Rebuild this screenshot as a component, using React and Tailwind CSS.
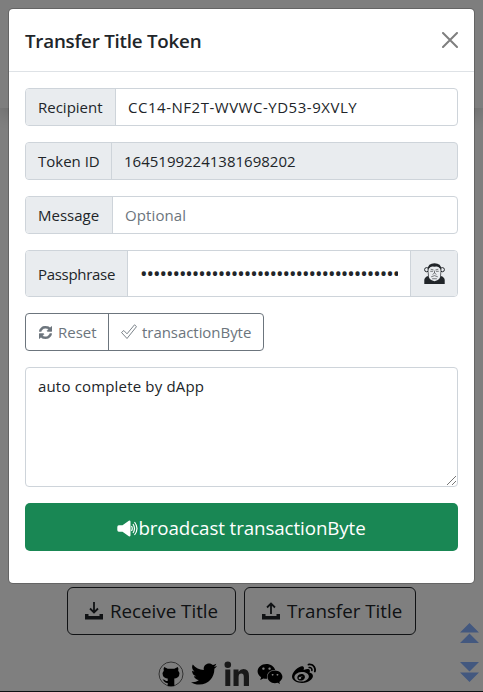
import { FaTwitter, FaWeixin, FaWeibo } from "react-icons/fa";

const font = "font-['Open_Sans','Noto_Sans',sans-serif]";

function Field({ label, labelClass, children, className = "h-[38px]", inputClass = "bg-white" }) {
  return (
    <div className={`flex rounded border border-[#ced4da] overflow-hidden ${className} ${inputClass}`}>
      <label className={`flex shrink-0 items-center border-r border-[#ced4da] bg-[#e9ecef] pl-3 ${labelClass}`}>{label}</label>
      {children}
    </div>
  );
}

function Monkey() {
  return (
    <svg className="h-[21px] w-[21px]" viewBox="0 0 22 22" fill="none">
      <path d="M0.300 22V17.500q.5-3 4-4h13.400q3.500 1 4 4V22z" fill="#212529" />
      <circle cx="2.800" cy="7" r="2.200" fill="#e9ecef" stroke="#212529" strokeWidth="1" />
      <circle cx="19.200" cy="7" r="2.200" fill="#e9ecef" stroke="#212529" strokeWidth="1" />
      <path d="M3.800 7Q4 .300 11 .300T18.200 7l-.5 8H4.300z" fill="#212529" />
      <path d="M5 6q2.500-3.500 6-2 3.500-1.500 6 2 1 3 .2 5.500.5 6.500-6.200 7.500-6.700-1-6.200-7.500Q4 9 5 6z" fill="#e9ecef" />
      <path d="M7 6.500l3 .8M15 6.500l-3 .8M6.500 8.700h3M12.500 8.700h3M9 12L11 10.500l2 1.500M11 8v2.500M7.500 14.500q3.500-2.500 7 0M8.500 16.500h5" stroke="#212529" strokeWidth=".6" />
    </svg>
  );
}

function TrayIcon({ up }) {
  return (
    <svg className="h-[18px] w-[18px] shrink-0" viewBox="0 0 18 18" fill="none">
      <path d="M0 12h3.500v2h11v-2H18v5.500H0z" fill="#212529" />
      <path d={up ? "M9 12V2M5 5.500l4-4 4 4" : "M9 0v10M5 6.500l4 4 4-4"} stroke="#212529" strokeWidth="1.800" />
    </svg>
  );
}

function Github() {
  return (
    <svg className="h-[26px] w-[26px]" viewBox="0 0 26 26">
      <circle cx="13" cy="13" r="12" fill="none" stroke="#666" strokeWidth="1" />
      <path d="M6.200 6l3.500 1.700h6.600L19.800 6q1 1.800.4 3.700 2.100 2 .9 4.800-1 2.600-4.800 3.100v7.600h-6.600v-3.300c-3.200.5-3.600-2.700-5.500-3.400 2.800-.7 3 2 5.500 1.500v-2.400q-3.800-.5-4.800-3.100-1.200-2.800.9-4.800Q5.200 7.800 6.200 6z" fill="#000" />
    </svg>
  );
}

function LinkedIn() {
  return (
    <svg className="h-[26px] w-[26px]" viewBox="0 0 26 26" fill="#333">
      <circle cx="3.800" cy="3.800" r="3.300" />
      <path d="M1.300 8.500h5V25h-5zM9.500 8.500h5v2.200q1.800-2.600 5-2.600 5.500 0 5.500 7V25h-5.200v-9q0-3.400-2.500-3.400-2.700 0-2.700 3.400v9H9.500z" />
    </svg>
  );
}

function Speaker() {
  return (
    <svg className="h-[17px] w-[21px]" viewBox="0 0 21 17" fill="none">
      <path d="M1.800 5.200h3.700L12.200.5q1.300 0 1.300 1v14q0 1-1.300 1L5.500 11.800H1.800Q.3 11.800.3 10V7q0-1.800 1.500-1.800z" fill="#fff" />
      <path d="M14.500 6q1.500 2.500 0 5M16 4q3 4.500 0 9M17.500 2q5 6.500 0 13" stroke="#fff" strokeWidth="1.200" />
    </svg>
  );
}

function Arrows({ down }) {
  return (
    <svg className="h-5 w-[19px]" viewBox="0 0 19 20" fill="#86b0ff">
      <path d={down ? "M0 0h19L9.500 9.500zM0 10.500h19L9.500 20z" : "M0 9.500h19L9.500 0zM0 20h19L9.500 10.500z"} />
    </svg>
  );
}

export default function App() {
  return (
    <div className={`relative h-[692px] w-[483px] overflow-hidden bg-white ${font} text-[15px] leading-6 text-[#212529]`}>
      <div className="flex h-full flex-col">
        <header className="h-[108px] shrink-0 bg-[#fdfdfd] shadow-[0_8px_16px_rgba(0,0,0,0.15)]" />
        <main className="flex grow flex-col justify-end">
          <div className="flex gap-2 pl-[67px] text-[18.750px]">
            <button className="flex h-12 w-[169px] items-center gap-[7px] rounded-md border border-[#212529] pl-[17px]"><TrayIcon />Receive Title</button>
            <button className="flex h-12 w-[172px] items-center gap-[7px] rounded-md border border-[#212529] pl-[17px]"><TrayIcon up />Transfer Title</button>
          </div>
          <div className="flex h-[57px] items-start gap-[7px] border-b border-[#212529] pl-[158px] pt-[26px] text-black">
            <Github />
            <FaTwitter className="h-[26px] w-[26px]" />
            <LinkedIn />
            <FaWeixin className="h-[26px] w-[26px]" />
            <FaWeibo className="ml-[2px] h-[26px] w-6" />
          </div>
        </main>
      </div>
      <div className="absolute left-[460px] top-[623px] flex flex-col gap-[19px]"><Arrows /><Arrows down /></div>
      <div className="absolute inset-0 bg-black/50" />

      <section className="absolute left-2 top-2 h-[576px] w-[467px] rounded-[5px] border border-black/20 bg-white bg-clip-padding">
        <header className="flex h-[63px] items-center justify-between border-b border-[#dee2e6] pl-4 pr-4">
          <h5 className="pt-0.5 text-[18.750px] font-semibold tracking-[-0.22px]">Transfer Title Token</h5>
          <svg className="h-4 w-4" viewBox="0 0 16 16" stroke="#7f7f7f" strokeWidth="2" strokeLinecap="round"><path d="M1 1l14 14M15 1L1 15" /></svg>
        </header>
        <div className="flex flex-col gap-4 p-4">
          <Field label="Recipient" labelClass="w-[90px]"><div className="flex items-center pl-3 tracking-[0.52px]">CC14-NF2T-WVWC-YD53-9XVLY</div></Field>
          <Field label="Token ID" labelClass="w-[86px]" inputClass="bg-[#e9ecef]"><div className="flex items-center pl-3">16451992241381698202</div></Field>
          <Field label="Message" labelClass="w-[87px]"><div className="flex items-center pl-3 tracking-[0.1px] text-[#6c757d]">Optional</div></Field>
          <Field label="Passphrase" labelClass="w-[102px] tracking-[-0.3px]" className="h-[47px]">
            <div className="flex w-[282px] shrink-0 items-center pl-3"><div className="w-[258px] overflow-hidden whitespace-nowrap text-[20px] tracking-[-1.040px]">••••••••••••••••••••••••••••••••••••••••</div></div>
            <div className="flex grow items-center justify-center border-l border-[#ced4da] bg-[#e9ecef]"><Monkey /></div>
          </Field>
          <div className="flex h-[38px] w-[239px] rounded border border-[#6c757d] text-[#6c757d]">
            <button className="flex w-[83px] items-center gap-[6px] border-r border-[#6c757d] pl-[13px]">
              <svg className="h-[13px] w-[13px]" viewBox="0 0 1536 1536" fill="currentColor" stroke="currentColor" strokeWidth="60"><path d="M1511 928q0 5-1 7-64 268-268 434.500T764 1536q-146 0-282.500-55T238 1324l-129 129q-19 19-45 19t-45-19-19-45V960q0-26 19-45t45-19h448q26 0 45 19t19 45-19 45l-137 137q71 66 161 102t187 36q134 0 250-65t186-179q11-17 53-117 8-23 30-23h192q13 0 22.500 9.500t9.500 22.500zm25-800v448q0 26-19 45t-45 19h-448q-26 0-45-19t-19-45 19-45l138-138Q969 256 768 256q-134 0-250 65T332 500q-11 17-53 117-8 23-30 23H50q-13 0-22.500-9.500T18 608v-7q65-268 270-434.500T768 0q146 0 284 55.500T1297 212l130-129q19-19 45-19t45 19 19 45z" /></svg>
              Reset
            </button>
            <button className="flex items-center gap-[5px] pl-3 tracking-[-0.05px]">
              <svg className="h-4 w-4 shrink-0" viewBox="0 0 16 16" fill="none" stroke="currentColor" strokeWidth=".9" strokeLinejoin="round"><path d="M.5 8.500l2.300-2 3.200 3.300L13.500.8l2 1.800L6 14.500z" /></svg>
              transactionByte
            </button>
          </div>
          <div className="relative h-[120px] rounded border border-[#ced4da] px-3 py-[6px] tracking-[0.17px]">
            auto complete by dApp
            <svg className="absolute bottom-px right-px h-[9px] w-[9px]" viewBox="0 0 9 9" stroke="#777" fill="none"><path d="M0 9L9 0M5 9l4-4" /></svg>
          </div>
          <button className="flex h-12 items-center justify-center rounded-[5px] bg-[#198754] pt-0.5 text-[18.750px] tracking-[-0.1px] text-white"><Speaker />broadcast transactionByte</button>
        </div>
      </section>
    </div>
  );
}
